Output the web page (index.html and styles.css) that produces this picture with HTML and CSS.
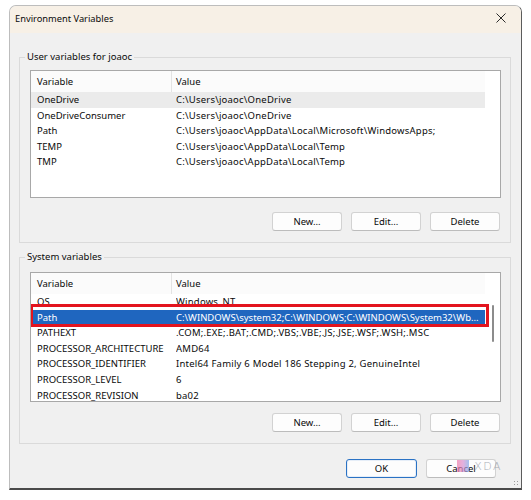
FILE: index.html
```html
<!DOCTYPE html>
<html lang="en">
<head>
<meta charset="utf-8">
<title>Environment Variables</title>
<link rel="stylesheet" href="styles.css">
</head>
<body>
<div class="window">
  <div class="titlebar">
    <span class="title">Environment Variables</span>
    <svg class="close" width="10" height="10" viewBox="0 0 10 10"><path d="M0.5 0.5 L9.5 9.5 M9.5 0.5 L0.5 9.5" stroke="#2b2b2b" stroke-width="1" fill="none"/></svg>
  </div>
  <div class="body">
    <fieldset class="group">
      <legend>User variables for joaoc</legend>
      <div class="list">
        <div class="list-head">
          <span class="col-name">Variable</span>
          <span class="col-value">Value</span>
        </div>
        <div class="row hover"><span class="col-name">OneDrive</span><span class="col-value">C:\Users\joaoc\OneDrive</span></div>
        <div class="row"><span class="col-name">OneDriveConsumer</span><span class="col-value">C:\Users\joaoc\OneDrive</span></div>
        <div class="row"><span class="col-name">Path</span><span class="col-value">C:\Users\joaoc\AppData\Local\Microsoft\WindowsApps;</span></div>
        <div class="row"><span class="col-name">TEMP</span><span class="col-value">C:\Users\joaoc\AppData\Local\Temp</span></div>
        <div class="row"><span class="col-name">TMP</span><span class="col-value">C:\Users\joaoc\AppData\Local\Temp</span></div>
      </div>
      <div class="actions">
        <button class="btn">New...</button>
        <button class="btn">Edit...</button>
        <button class="btn">Delete</button>
      </div>
    </fieldset>

    <fieldset class="group group-system">
      <legend>System variables</legend>
      <div class="list list-tall">
        <div class="list-head">
          <span class="col-name">Variable</span>
          <span class="col-value">Value</span>
        </div>
        <div class="row"><span class="col-name">OS</span><span class="col-value">Windows_NT</span></div>
        <div class="row selected"><span class="col-name">Path</span><span class="col-value">C:\WINDOWS\system32;C:\WINDOWS;C:\WINDOWS\System32\Wb...</span><span class="mark"></span></div>
        <div class="row"><span class="col-name">PATHEXT</span><span class="col-value">.COM;.EXE;.BAT;.CMD;.VBS;.VBE;.JS;.JSE;.WSF;.WSH;.MSC</span></div>
        <div class="row"><span class="col-name">PROCESSOR_ARCHITECTURE</span><span class="col-value">AMD64</span></div>
        <div class="row"><span class="col-name">PROCESSOR_IDENTIFIER</span><span class="col-value">Intel64 Family 6 Model 186 Stepping 2, GenuineIntel</span></div>
        <div class="row"><span class="col-name">PROCESSOR_LEVEL</span><span class="col-value">6</span></div>
        <div class="row"><span class="col-name">PROCESSOR_REVISION</span><span class="col-value">ba02</span></div>
        <span class="thumb"></span>
      </div>
      <div class="actions actions-system">
        <button class="btn">New...</button>
        <button class="btn">Edit...</button>
        <button class="btn">Delete</button>
      </div>
    </fieldset>

    <div class="footer">
      <button class="btn btn-default">OK</button>
      <button class="btn">Cancel</button>
      <span class="badge"><span class="badge-mark"></span><span class="badge-text">XDA</span></span>
    </div>
  </div>
  <span class="grip"></span>
</div>
</body>
</html>
```
FILE: styles.css
```css
html, body {
  margin: 0;
  padding: 0;
  background: #ffffff;
}

body {
  font-family: "Noto Sans", "Open Sans", sans-serif;
  font-size: 9.5px;
  color: #0a0a0a;
}

.window {
  position: relative;
  box-sizing: border-box;
  margin: 5px 0 0 9px;
  width: 513px;
  height: 485px;
  border: 1px solid #bdbdbd;
  border-right-color: #5c5c5c;
  border-bottom: 2px solid #4a4a4a;
  border-radius: 7px 7px 0 0;
  background: #f0f0f0;
  display: flex;
  flex-direction: column;
}

.titlebar {
  height: 27px;
  flex: none;
  display: flex;
  align-items: center;
  justify-content: space-between;
  padding: 0 15px 0 5px;
  background: #f7f0e6;
  border-radius: 6px 6px 0 0;
}

.title {
  margin-top: -3px;
  font-size: 9.3px;
}

.close {
  margin-top: -3px;
}

.body {
  padding: 16px 10px 0 9px;
  display: flex;
  flex-direction: column;
}

.group {
  margin: 0;
  padding: 5px 9px 11px 10px;
  border: 1px solid #dadada;
  min-width: 0;
}

.group-system {
  margin-top: 6px;
  padding-top: 7px;
}

.group legend {
  margin-left: -5px;
  padding: 0 2px;
  line-height: 16px;
}

.list {
  position: relative;
  box-sizing: border-box;
  height: 128px;
  border: 1px solid #a8a8a8;
  background: #ffffff;
  overflow: hidden;
}

.list-tall {
  height: 130px;
}

.list-head {
  display: grid;
  grid-template-columns: 141px 1fr;
  height: 21px;
  margin-right: 15px;
  background: #fbfbfb;
  align-items: center;
}

.list-head .col-name {
  padding-left: 6px;
  border-right: 1px solid #e3e3e3;
  height: 100%;
  display: flex;
  align-items: center;
}

.list-head .col-value {
  padding-left: 4px;
}

.row {
  position: relative;
  display: grid;
  grid-template-columns: 145px 1fr;
  height: 15.6px;
  line-height: 15.6px;
  margin-right: 15px;
  white-space: nowrap;
}

.row .col-name {
  padding-left: 6px;
  overflow: hidden;
}

.row .col-value {
  overflow: hidden;
  letter-spacing: 0.22px;
}

.row.hover {
  background: #ebebeb;
}

.row.selected {
  background: #1f66bf;
  color: #ffffff;
}

.row.selected .col-value {
  letter-spacing: 0;
}

/* red frame drawn around the chosen entry */
.mark {
  position: absolute;
  left: -1px;
  right: -4px;
  top: -6px;
  bottom: -2px;
  border: 3px solid #e3141e;
}

.thumb {
  position: absolute;
  right: 6px;
  top: 32px;
  width: 2px;
  height: 37px;
  border-radius: 1px;
  background: #8c8c8c;
}

.actions {
  display: flex;
  justify-content: flex-end;
  gap: 9px;
  margin-top: 14px;
  padding-right: 1px;
}

.actions-system {
  margin-top: 11px;
}

.btn {
  box-sizing: border-box;
  width: 70px;
  height: 19px;
  padding: 0;
  border: 1px solid #d2d2d2;
  border-bottom-color: #bcbcbc;
  border-radius: 3px;
  background: #fdfdfd;
  font-family: inherit;
  font-size: 9.5px;
  line-height: 17px;
  color: #0a0a0a;
}

.footer {
  position: relative;
  display: flex;
  justify-content: flex-end;
  gap: 9px;
  margin-top: 15px;
  padding-right: 15px;
}

.btn-default {
  width: 71px;
  border: 1px solid #2a72c4;
  box-shadow: inset 0 0 0 1px #e6eef8;
}

/* watermark over the cancel button */
.badge {
  position: absolute;
  right: 9px;
  top: 1px;
  display: flex;
  align-items: center;
  gap: 5px;
}

.badge-mark {
  width: 12px;
  height: 12px;
  background: linear-gradient(90deg, #f07aa8 0%, #d98fd0 50%, #7ea6e6 100%);
  opacity: 0.7;
}

.badge-text {
  font-family: "DejaVu Sans", sans-serif;
  font-size: 11px;
  font-weight: 300;
  letter-spacing: 1.5px;
  color: #a8adb5;
  line-height: 11px;
}

.grip {
  position: absolute;
  right: 2px;
  bottom: 2px;
  width: 6px;
  height: 6px;
  background: radial-gradient(circle, #9a9a9a 0.7px, transparent 1px) 0 0 / 3px 3px;
}
```
